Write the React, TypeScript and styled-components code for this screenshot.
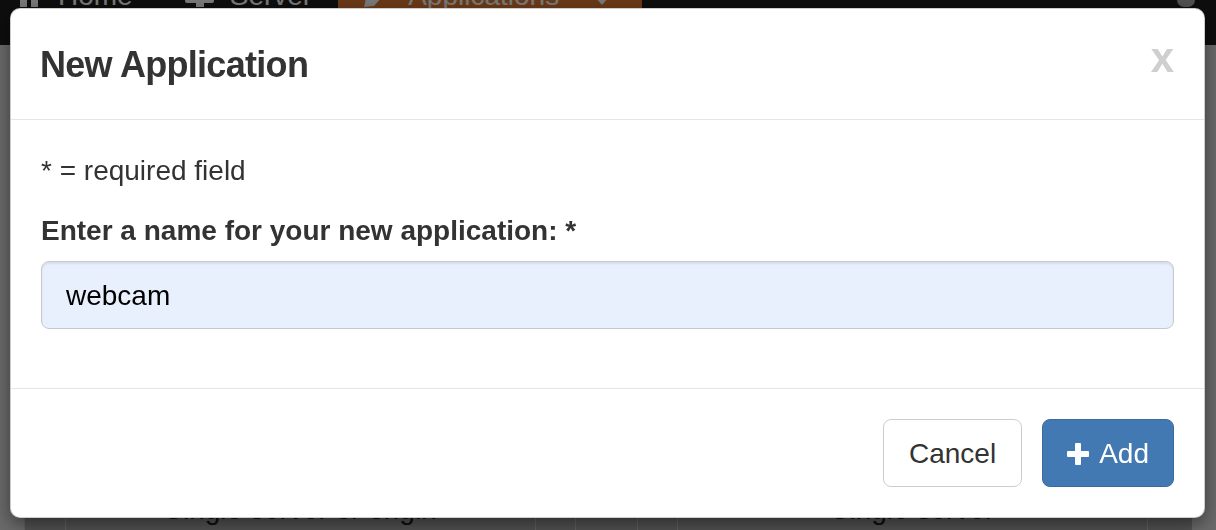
import React, { useState } from "react";
import styled, { createGlobalStyle } from "styled-components";

const GlobalStyle = createGlobalStyle`
  * {
    box-sizing: border-box;
  }
  html, body {
    margin: 0;
    padding: 0;
  }
  body {
    font-family: "Liberation Sans", Arial, Helvetica, sans-serif;
    color: #333;
    background: #d4d4d4;
    overflow: hidden;
  }
`;

/* page behind the modal */

const Page = styled.div`
  height: 100vh;
  display: flex;
  flex-direction: column;
  overflow: hidden;
`;

const NavBar = styled.nav`
  height: 45px;
  flex-shrink: 0;
  display: flex;
  align-items: flex-start;
  background: #1c1c1c;
  overflow: hidden;
`;

const NavLink = styled.a<{ $gap: number; $active?: boolean }>`
  display: flex;
  align-items: center;
  gap: ${(p) => p.$gap}px;
  height: 40px;
  margin-top: -24px;
  padding: 0 ${(p) => (p.$active ? 34 : 26)}px 0 26px;
  background: ${(p) => (p.$active ? "#d6742e" : "transparent")};
  color: #f4f4f4;
  font-size: 28px;
  line-height: 40px;
  text-decoration: none;
  white-space: nowrap;

  &:first-child {
    padding-left: 20px;
  }
`;

const Caret = styled.span`
  width: 0;
  height: 0;
  margin: 10px 0 0 17px;
  border-left: 6px solid transparent;
  border-right: 6px solid transparent;
  border-top: 7px solid #f4f4f4;
`;

const NavSpacer = styled.div`
  flex: 1;
`;

const UserPill = styled.div`
  width: 18px;
  height: 26px;
  margin: -19px 21px 0 0;
  border-radius: 7px;
  background: #a2a2a2;
`;

const Main = styled.main`
  flex: 1;
  display: flex;
  flex-direction: column;
  justify-content: flex-end;
  padding: 0 24px;
  overflow: hidden;
`;

const TableRow = styled.div`
  display: grid;
  grid-template-columns: 41px 470px 40px 62px 40px 470px 45px;
  margin-bottom: -16px;
  background: #a4a4a4;
`;

const Cell = styled.div`
  height: 72px;
  padding: 16px 0;
  border-left: 1px solid #c4c4c4;
  text-align: center;
  font-size: 28px;
  line-height: 40px;
  color: #1a1a1a;
`;

/* modal */

const Backdrop = styled.div`
  position: fixed;
  inset: 0;
  background: rgba(0, 0, 0, 0.5);
`;

const Modal = styled.div`
  position: absolute;
  top: 8px;
  left: 10px;
  width: 1195px;
  background: #fff;
  border: 1px solid rgba(0, 0, 0, 0.2);
  border-radius: 10px;
  box-shadow: 0 6px 18px rgba(0, 0, 0, 0.45);
`;

const ModalHeader = styled.div`
  display: flex;
  align-items: flex-start;
  justify-content: space-between;
  padding: 30px 30px 30px 29px;
  border-bottom: 1px solid #e5e5e5;
`;

const ModalTitle = styled.h4`
  margin: 0;
  padding-top: 1px;
  height: 50px;
  font-size: 36px;
  font-weight: bold;
  letter-spacing: -0.7px;
  line-height: 50px;
  color: #333;
`;

const CloseButton = styled.button`
  margin-top: -2px;
  padding: 0;
  border: none;
  background: transparent;
  font-family: inherit;
  font-size: 42px;
  font-weight: bold;
  line-height: 1;
  color: #cfcfcf;
  cursor: pointer;
`;

const ModalBody = styled.div`
  padding: 31px 30px 29px;
`;

const Hint = styled.p`
  margin: 0 0 20px;
  font-size: 28px;
  line-height: 40px;
  color: #333;
`;

const FormGroup = styled.div`
  margin-bottom: 30px;
`;

const Label = styled.label`
  display: block;
  margin-bottom: 10px;
  font-size: 28px;
  font-weight: bold;
  line-height: 40px;
  color: #333;
`;

const TextInput = styled.input`
  display: block;
  width: 100%;
  height: 68px;
  padding: 13px 24px 11px;
  border: 1px solid #c6cacf;
  border-radius: 8px;
  background: #e8f0fe;
  box-shadow: inset 0 2px 2px rgba(0, 0, 0, 0.075);
  font-family: inherit;
  font-size: 28px;
  line-height: 40px;
  color: #000;
  outline: none;
`;

const ModalFooter = styled.div`
  display: flex;
  justify-content: flex-end;
  gap: 20px;
  padding: 30px;
  border-top: 1px solid #e5e5e5;
`;

const Button = styled.button<{ $primary?: boolean }>`
  display: inline-flex;
  align-items: center;
  gap: 10px;
  height: 68px;
  padding: 14px ${(p) => (p.$primary ? 24 : 25)}px 12px;
  border: 1px solid ${(p) => (p.$primary ? "#396aa0" : "#ccc")};
  border-radius: 8px;
  background: ${(p) => (p.$primary ? "#4379b2" : "#fff")};
  color: ${(p) => (p.$primary ? "#fff" : "#333")};
  font-family: inherit;
  font-size: 28px;
  line-height: 40px;
  cursor: pointer;
`;

const HomeIcon = () => (
  <svg width="18" height="22" viewBox="0 0 18 22" fill="currentColor">
    <polygon points="9,0 18,9 18,22 11,22 11,14 7,14 7,22 0,22 0,9" />
  </svg>
);

const ServerIcon = () => (
  <svg width="29" height="22" viewBox="0 0 29 22" fill="currentColor">
    <rect x="0" y="0" width="29" height="18" rx="2" />
    <rect x="11" y="18" width="8" height="4" />
  </svg>
);

const AppsIcon = () => (
  <svg width="24" height="22" viewBox="0 0 24 22" fill="currentColor">
    <polygon points="17,0 24,5 10,21 0,22 2,13" />
  </svg>
);

const PlusIcon = () => (
  <svg width="22" height="22" viewBox="0 0 22 22" fill="currentColor">
    <rect x="8" y="0" width="6" height="22" rx="1" />
    <rect x="0" y="8" width="22" height="6" rx="1" />
  </svg>
);

const App: React.FC = () => {
  const [name, setName] = useState("webcam");

  return (
    <>
      <GlobalStyle />
      <Page>
        <NavBar>
          <NavLink $gap={20}>
            <HomeIcon />
            Home
          </NavLink>
          <NavLink $gap={16}>
            <ServerIcon />
            Server
          </NavLink>
          <NavLink $gap={20} $active>
            <AppsIcon />
            Applications
            <Caret />
          </NavLink>
          <NavSpacer />
          <UserPill />
        </NavBar>
        <Main>
          <TableRow>
            <Cell />
            <Cell>Single server or origin</Cell>
            <Cell />
            <Cell />
            <Cell />
            <Cell>Single server</Cell>
            <Cell />
          </TableRow>
        </Main>
      </Page>

      <Backdrop />
      <Modal>
        <ModalHeader>
          <ModalTitle>New Application</ModalTitle>
          <CloseButton aria-label="Close">x</CloseButton>
        </ModalHeader>
        <ModalBody>
          <Hint>* = required field</Hint>
          <FormGroup>
            <Label htmlFor="appName">Enter a name for your new application: *</Label>
            <TextInput
              id="appName"
              value={name}
              onChange={(e) => setName(e.target.value)}
            />
          </FormGroup>
        </ModalBody>
        <ModalFooter>
          <Button>Cancel</Button>
          <Button $primary>
            <PlusIcon />
            Add
          </Button>
        </ModalFooter>
      </Modal>
    </>
  );
};

export default App;
